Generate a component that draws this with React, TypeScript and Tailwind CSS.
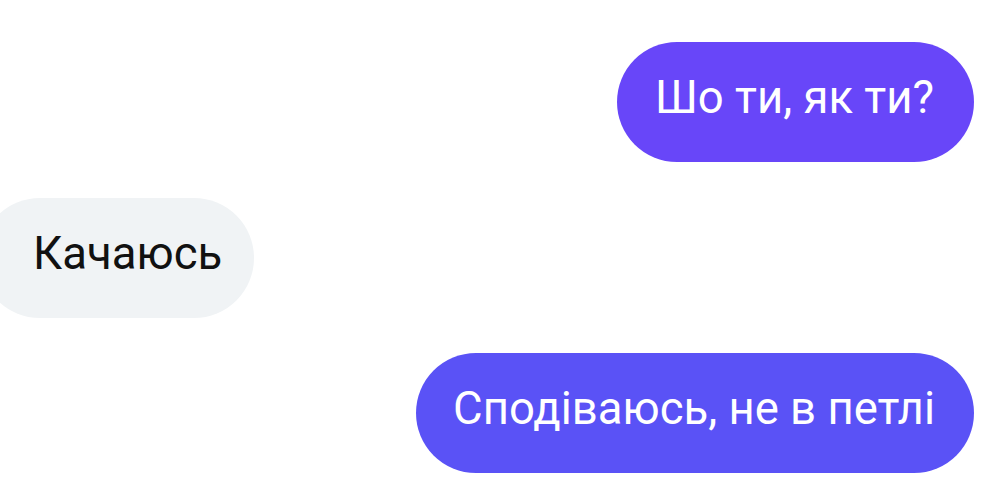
const font = { fontFamily: "Roboto, 'Noto Sans', sans-serif" };

export default function App() {
  return (
    <div
      className="flex h-[490px] w-[998px] flex-col gap-[36px] overflow-hidden bg-white pr-[24px] pt-[42px]"
      style={font}
    >
      <div className="flex justify-end">
        <div className="flex h-[120px] items-center rounded-full bg-[#6846f9] pb-[8px] pl-[38px] pr-[40px] text-[45.5px] text-white">
          Шо ти, як ти?
        </div>
      </div>
      <div className="flex justify-start">
        <div className="-ml-[20px] flex h-[120px] items-center rounded-full bg-[#f0f3f5] pb-[8px] pl-[53px] pr-[32px] text-[45.5px] text-[#111]">
          Качаюсь
        </div>
      </div>
      <div className="-mt-px flex justify-end">
        <div className="flex h-[120px] items-center rounded-full bg-[#5a52f6] pb-[8px] pl-[37px] pr-[39px] text-[45.5px] text-white">
          Сподіваюсь, не в петлі
        </div>
      </div>
    </div>
  );
}
